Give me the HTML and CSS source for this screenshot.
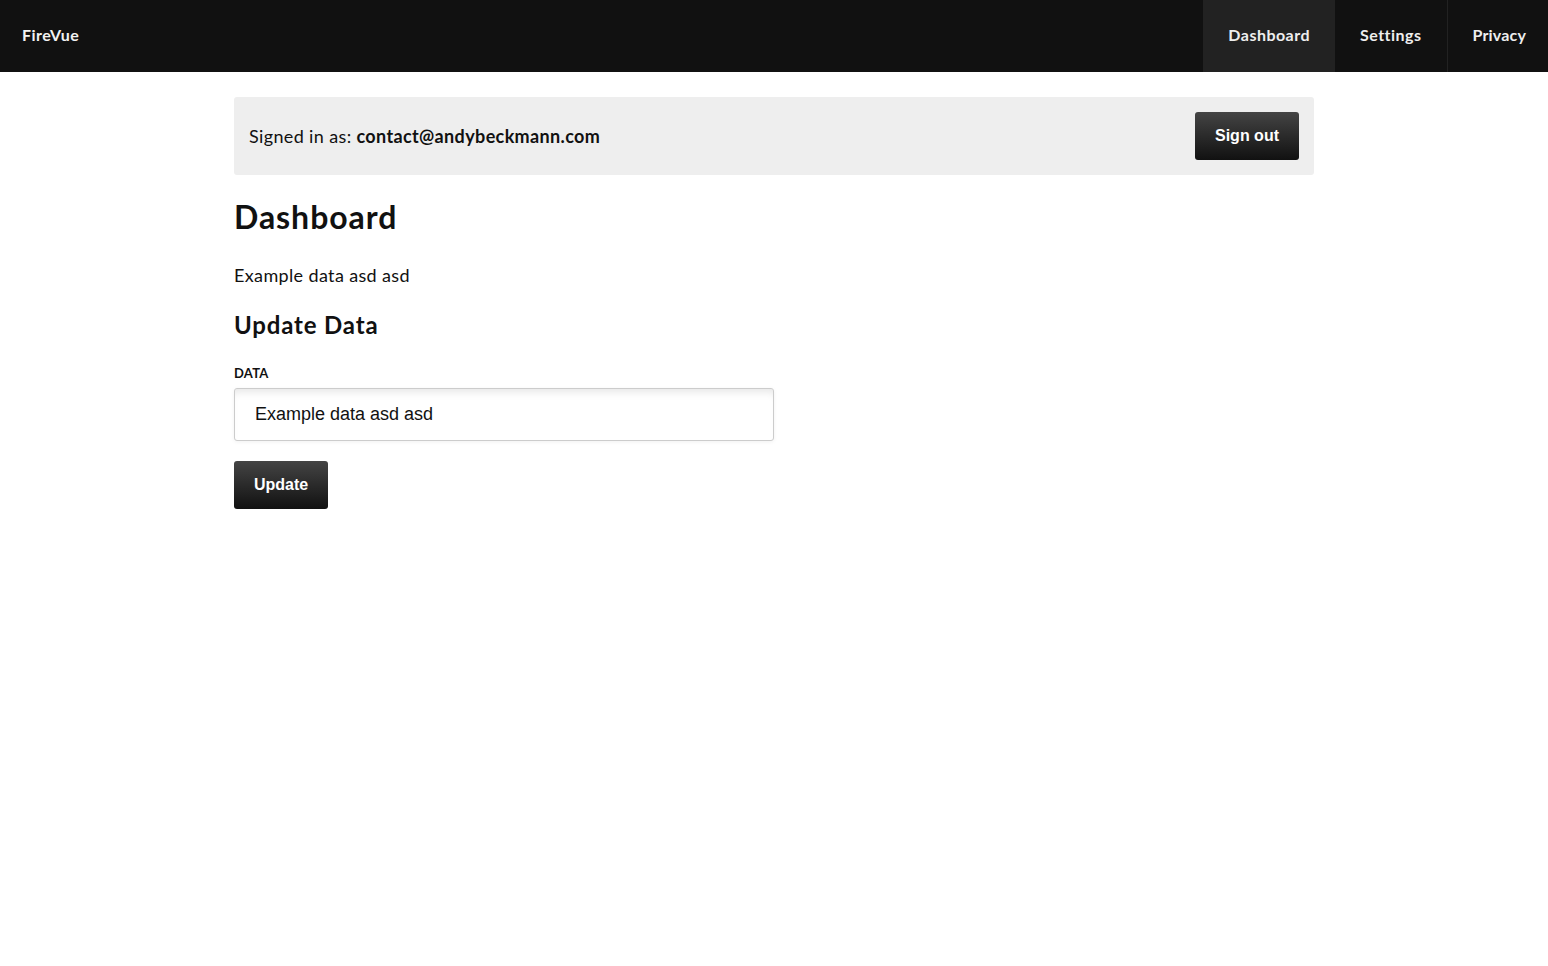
FILE: index.html
```html
<!DOCTYPE html>
<html>
<head>
<meta charset="utf-8">
<title>FireVue</title>
<link rel="stylesheet" href="styles.css">
</head>
<body>
<header class="navbar">
  <div class="brand">FireVue</div>
  <nav class="nav">
    <a class="nav-item active">Dashboard</a>
    <a class="nav-item sep">Settings</a>
    <a class="nav-item">Privacy</a>
  </nav>
</header>
<main class="container">
  <div class="userbar">
    <div class="signed">Signed in as: <strong>contact@andybeckmann.com</strong></div>
    <button class="btn btn-signout">Sign out</button>
  </div>
  <h1 class="title">Dashboard</h1>
  <p class="data">Example data asd asd</p>
  <h2 class="subtitle">Update Data</h2>
  <label class="label">DATA</label>
  <input class="input" type="text" value="Example data asd asd">
  <div><button class="btn btn-update">Update</button></div>
</main>
</body>
</html>
```
FILE: styles.css
```css
* { box-sizing: border-box; }
html, body { margin: 0; padding: 0; background: #fff; }
body { font-family: Lato, "Noto Sans", sans-serif; color: #111; }

.navbar {
  height: 72px;
  background: #111;
  display: flex;
  align-items: stretch;
  justify-content: space-between;
}
.brand {
  color: #f2f2f2;
  font-size: 16px;
  font-weight: 700;
  letter-spacing: 0.03em;
  padding-left: 22px;
  padding-bottom: 3px;
  display: flex;
  align-items: center;
}
.nav { display: flex; }
.nav-item {
  color: #eee;
  font-size: 16px;
  font-weight: 700;
  letter-spacing: 0.03em;
  display: flex;
  align-items: center;
  padding: 0 25px 3px 25px;
}
.nav-item:last-child { padding-right: 22px; letter-spacing: 0.01em; }
.nav-item.active { background: #222; }
.nav-item.sep { border-right: 1px solid #222; }

.container {
  width: 1080px;
  margin: 25px auto 0;
}
.userbar {
  background: #eee;
  border-radius: 3px;
  padding: 15px;
  display: flex;
  align-items: center;
  justify-content: space-between;
}
.signed { font-size: 18px; color: #111; font-weight: 400; letter-spacing: 0.02em; }
.signed strong { font-weight: 700; }

.btn {
  font-family: "Liberation Sans", Arial, sans-serif;
  font-weight: 700;
  font-size: 16px;
  color: #fff;
  border: none;
  border-radius: 3px;
  background: linear-gradient(#444, #111);
  height: 48px;
  cursor: pointer;
}
.btn-signout { width: 104px; }
.btn-update { width: 94px; margin-top: 20px; }

.title {
  font-size: 32px;
  font-weight: 700;
  letter-spacing: 0.03em;
  margin: 22px 0 0;
  line-height: 40px;
}
.data {
  font-size: 18px;
  letter-spacing: 0.02em;
  margin: 26px 0 0;
  line-height: 24px;
}
.subtitle {
  font-size: 24px;
  font-weight: 700;
  letter-spacing: 0.035em;
  margin: 23px 0 0;
  line-height: 30px;
}
.label {
  display: block;
  font-size: 13px;
  font-weight: 700;
  letter-spacing: 0.02em;
  margin-top: 25px;
  line-height: 16px;
}
.input {
  display: block;
  width: 540px;
  height: 53px;
  margin-top: 7px;
  border: 1px solid #ccc;
  border-radius: 3px;
  padding: 0 20px;
  font-family: "Liberation Sans", Arial, sans-serif;
  font-size: 18px;
  color: #111;
  box-shadow: inset 0 8px 8px -5px rgba(0,0,0,0.1), 0 1px 4px rgba(0,0,0,0.06);
  outline: none;
}
```
